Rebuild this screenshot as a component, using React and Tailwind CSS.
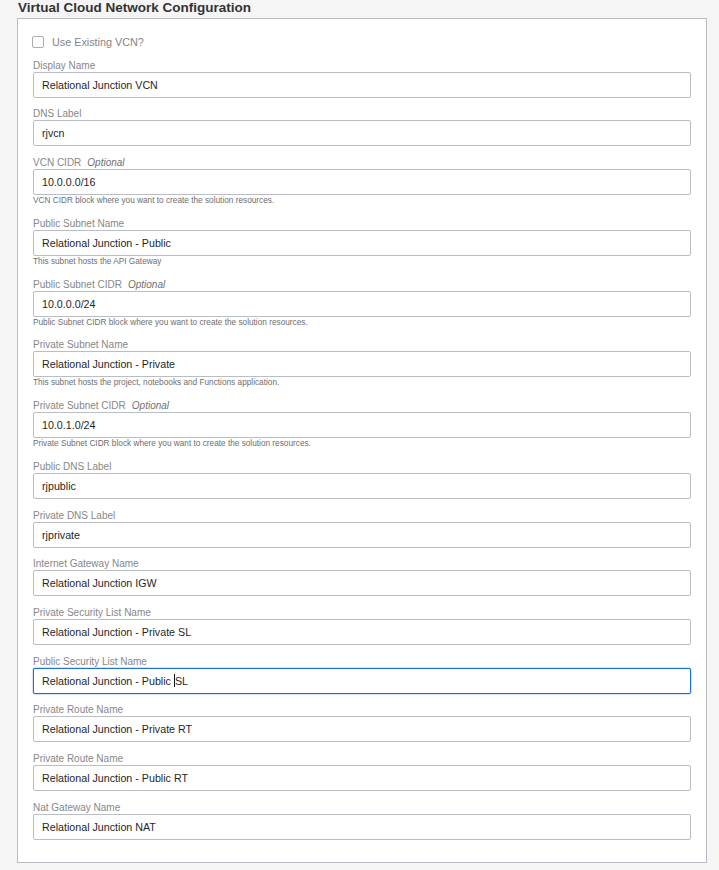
import React from "react";

const fields = [
  { label: "Display Name", value: "Relational Junction VCN" },
  { label: "DNS Label", value: "rjvcn" },
  { label: "VCN CIDR", optional: true, value: "10.0.0.0/16", help: "VCN CIDR block where you want to create the solution resources." },
  { label: "Public Subnet Name", value: "Relational Junction - Public", help: "This subnet hosts the API Gateway" },
  { label: "Public Subnet CIDR", optional: true, value: "10.0.0.0/24", help: "Public Subnet CIDR block where you want to create the solution resources." },
  { label: "Private Subnet Name", value: "Relational Junction - Private", help: "This subnet hosts the project, notebooks and Functions application." },
  { label: "Private Subnet CIDR", optional: true, value: "10.0.1.0/24", help: "Private Subnet CIDR block where you want to create the solution resources." },
  { label: "Public DNS Label", value: "rjpublic" },
  { label: "Private DNS Label", value: "rjprivate" },
  { label: "Internet Gateway Name", value: "Relational Junction IGW" },
  { label: "Private Security List Name", value: "Relational Junction - Private SL" },
  { label: "Public Security List Name", value: "Relational Junction - Public SL", focused: true },
  { label: "Private Route Name", value: "Relational Junction - Private RT" },
  { label: "Private Route Name", value: "Relational Junction - Public RT" },
  { label: "Nat Gateway Name", value: "Relational Junction NAT" },
];

function Field({ f }) {
  return (
    <div className="flex flex-col">
      <div className="text-[10px] leading-[12px] text-[#878787] whitespace-nowrap">
        {f.label}
        {f.optional && <span className="italic text-[#707070] ml-[6px]">Optional</span>}
      </div>
      <div
        className={
          "h-[26px] flex items-center pl-[8px] rounded-[2px] bg-white text-[10.7px] text-[#1f1f1f] whitespace-nowrap " +
          (f.focused
            ? "border border-[#1f6fd0] shadow-[0_0_1.5px_#1f6fd0]"
            : "border border-[#b9bec4]")
        }
      >
        {f.focused ? (
          <span className="flex items-center">
            <span className="whitespace-pre">Relational Junction - Public </span>
            <span className="inline-block w-px h-[13px] bg-[#111]" />
            <span>SL</span>
          </span>
        ) : (
          f.value
        )}
      </div>
      {f.help && (
        <div className="text-[8.25px] leading-[12.1px] text-[#6e6e6e] whitespace-nowrap">{f.help}</div>
      )}
    </div>
  );
}

export default function App() {
  return (
    <div
      className="w-[719px] h-[870px] bg-[#f5f5f5] overflow-hidden"
      style={{ fontFamily: '"Liberation Sans", Arial, sans-serif' }}
    >
      <div className="pl-[18px] text-[13.5px] leading-[16px] font-bold text-[#333] whitespace-nowrap">
        Virtual Cloud Network Configuration
      </div>
      <div className="ml-[17px] mt-[2px] w-[690px] bg-white border border-[#b9bdc3] pt-[17px] pb-[22px] px-[15px] flex flex-col">
        <label className="flex items-center h-[12px]">
          <span className="w-[12px] h-[12px] ml-[-1px] border border-[#a8adb3] rounded-[2px] bg-white" />
          <span className="ml-[8px] text-[10.8px] text-[#858585]">Use Existing VCN?</span>
        </label>
        <div className="mt-[11.7px] flex flex-col gap-[10.7px]">
          {fields.map((f, i) => (
            <Field key={i} f={f} />
          ))}
        </div>
      </div>
    </div>
  );
}
